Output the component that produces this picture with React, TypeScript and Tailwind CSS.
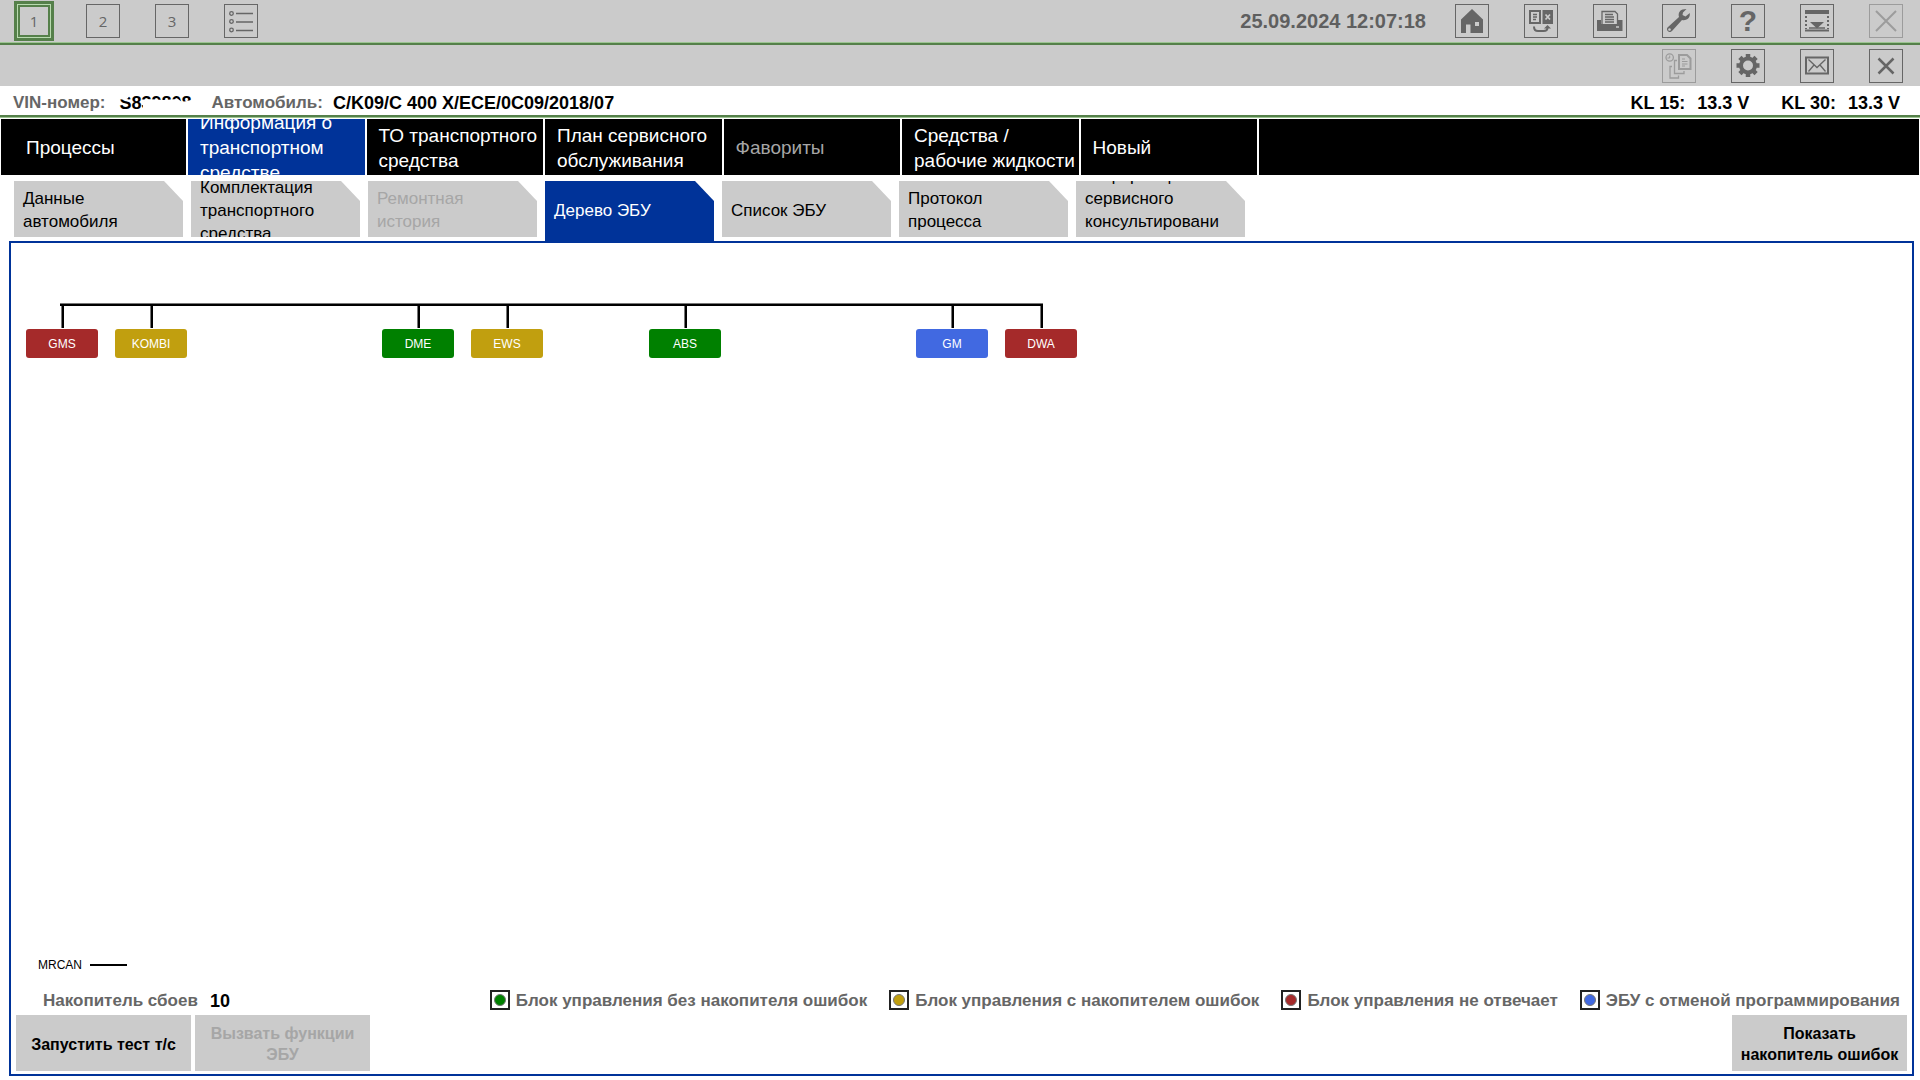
import type { ReactNode } from 'react';
import clsx from 'clsx';

const mainTabs = [
  { label: 'Информация о\nтранспортном\nсредстве', active: true },
  { label: 'ТО транспортного\nсредства' },
  { label: 'План сервисного\nобслуживания' },
  { label: 'Фавориты', disabled: true },
  { label: 'Средства /\nрабочие жидкости' },
  { label: 'Новый' },
];

const subTabs = [
  { label: 'Данные\nавтомобиля' },
  { label: 'Комплектация\nтранспортного\nсредства' },
  { label: 'Ремонтная\nистория', disabled: true },
  { label: 'Дерево ЭБУ', active: true },
  { label: 'Список ЭБУ' },
  { label: 'Протокол\nпроцесса' },
  { label: 'Информация\nсервисного\nконсультировани\nя' },
];

const colors = {
  ok: 'bg-[#008000]',
  fault: 'bg-[#c19f0f]',
  silent: 'bg-[#a52a2a]',
  aborted: 'bg-[#4169e1]',
};

// null = free slot on the bus
const ecus: ({ name: string; state: keyof typeof colors } | null)[] = [
  { name: 'GMS', state: 'silent' },
  { name: 'KOMBI', state: 'fault' },
  null,
  null,
  { name: 'DME', state: 'ok' },
  { name: 'EWS', state: 'fault' },
  null,
  { name: 'ABS', state: 'ok' },
  null,
  null,
  { name: 'GM', state: 'aborted' },
  { name: 'DWA', state: 'silent' },
];

const legend: { label: string; state: keyof typeof colors }[] = [
  { label: 'Блок управления без накопителя ошибок', state: 'ok' },
  { label: 'Блок управления с накопителем ошибок', state: 'fault' },
  { label: 'Блок управления не отвечает', state: 'silent' },
  { label: 'ЭБУ с отменой программирования', state: 'aborted' },
];

function IconButton({ label, disabled, children }: { label: string; disabled?: boolean; children: ReactNode }) {
  return (
    <button
      aria-label={label}
      disabled={disabled}
      className={clsx(
        'flex size-[34px] items-center justify-center border',
        disabled ? 'border-[#9c9c9c] text-[#9c9c9c]' : 'border-[#666] text-[#666]'
      )}
    >
      {children}
    </button>
  );
}

function Glyph({ children }: { children: ReactNode }) {
  return (
    <svg viewBox="1 1 32 32" className="size-8 shrink-0" fill="none" stroke="currentColor" strokeWidth="2">
      {children}
    </svg>
  );
}

function HomeIcon() {
  return (
    <Glyph>
      <path
        fill="currentColor"
        stroke="none"
        fillRule="evenodd"
        d="M17 5 28 15.500V29H15.500V20.500H11V29H6V15.500ZM20 18V22H24V18Z"
      />
    </Glyph>
  );
}

function SwapIcon() {
  return (
    <Glyph>
      <path d="M6 7H16V19H6Z" />
      <path d="M9 10.500H13M9 13H13M9 15.500H12" strokeWidth="1.300" />
      <path d="M18.500 6H29V20H18.500Z" fill="currentColor" stroke="none" />
      <path d="M21.500 10.500 26 15.500M26 10.500 21.500 15.500" stroke="#cbcbcb" strokeWidth="1.700" />
      <path d="M10 22.500C10 26 11.500 27 14 27H19.500C22.500 27 23.500 26 23.500 23.500" />
      <path d="M20 24.500 23.500 21 27 24.500Z" fill="currentColor" stroke="none" />
    </Glyph>
  );
}

function PrinterIcon() {
  return (
    <Glyph>
      <path d="M4 16H8V20H25V16H29.500V27H4Z" fill="currentColor" stroke="none" />
      <path d="M9 20V7.500H22L24.500 10V20" strokeWidth="1.300" />
      <path d="M12 10.500H20M12 13H21M12 15.500H21M12 18H21" strokeWidth="1.300" />
      <path d="M23 23H26" stroke="#cbcbcb" strokeWidth="1.500" />
    </Glyph>
  );
}

function WrenchIcon() {
  return (
    <Glyph>
      <path
        fill="currentColor"
        stroke="none"
        fillRule="evenodd"
        d="M24.500 5 20.500 5.500C17.500 6.500 16 9.500 17 13L5.500 23.500C4 25.500 6 28.500 8.500 28L10 27 20 16C24 17 27.500 14.500 27.800 11V9L23.500 12.500 20.500 11 21 8.500ZM7.500 24.200A1.300 1.300 0 1 0 7.510 24.200Z"
      />
    </Glyph>
  );
}

function CollapseIcon() {
  return (
    <Glyph>
      <path d="M5 6H29V10H5Z" fill="currentColor" stroke="none" />
      <path d="M6 12V25M28 12V25" strokeDasharray="2 2" />
      <path d="M10 18H24L17 24.500Z" fill="currentColor" stroke="none" />
      <path d="M9 24H25" strokeWidth="1.500" />
      <path d="M5 26.500H29" strokeWidth="2" />
    </Glyph>
  );
}

function HistoryDocsIcon() {
  return (
    <Glyph>
      <circle cx="7.700" cy="8.500" r="3.700" strokeWidth="1.300" />
      <path d="M7.700 6.500V9H5.500" strokeWidth="1" />
      <path d="M17 6H25L28.500 9.500V20H17Z" />
      <path d="M20 10H23M20 12.500H25.500M20 15H25.500M20 17H23" strokeWidth="1.200" />
      <path d="M15 11.500H12.500V24.500H22V22" strokeWidth="1.300" />
      <path d="M10 17.500H8V29H16.500V26.500" strokeWidth="1.300" />
    </Glyph>
  );
}

function GearIcon() {
  return (
    <Glyph>
      <circle cx="17" cy="16.500" r="7" strokeWidth="4" />
      <path
        d="M17 5V9M17 24V28M5.500 16.500H9.500M24.500 16.500H28.500M8.900 8.400 11.700 11.200M22.300 21.800 25.100 24.600M25.100 8.400 22.300 11.200M11.700 21.800 8.900 24.600"
        strokeWidth="4.500"
      />
    </Glyph>
  );
}

function MailIcon() {
  return (
    <Glyph>
      <path d="M6 8.500H28V24.500H6Z" />
      <path d="M8.500 10.500 17 18.500 25.500 10.500M8.500 22.500 14 16M25.500 22.500 20 16" strokeWidth="1.300" />
    </Glyph>
  );
}

function ListIcon() {
  return (
    <Glyph>
      <g strokeWidth="1.300">
        <circle cx="7.500" cy="9.500" r="1.800" />
        <circle cx="7.500" cy="17.500" r="1.800" />
        <circle cx="7.500" cy="26" r="1.800" />
        <path d="M12 9.500H29M12 18H29M12 26.500H29" />
      </g>
    </Glyph>
  );
}

function Rule({ flip }: { flip?: boolean }) {
  return (
    <div
      className={clsx('h-[3px] shrink-0 border-[#9cc492] bg-[#55804a]', flip ? 'border-b' : 'border-t')}
    />
  );
}

function TopBar() {
  return (
    <header className="flex h-[42px] shrink-0 items-start justify-between bg-[#cbcbcb] px-[17px] pt-1">
      <div className="flex gap-[35px] font-['Open_Sans',sans-serif] text-[15px] text-[#666]">
        <button className="size-[34px] border border-[#b9dab0] inset-ring-2 inset-ring-[#55804a] outline-3 outline-[#55804a]">
          1
        </button>
        <button className="size-[34px] border border-[#666]">2</button>
        <button className="size-[34px] border border-[#666]">3</button>
        <IconButton label="Список операций">
          <ListIcon />
        </IconButton>
      </div>
      <div className="flex items-center gap-[35px]">
        <time className="-mr-1.5 text-[20px] leading-[34px] font-bold text-[#5f5f5f]">25.09.2024 12:07:18</time>
        <IconButton label="Домой">
          <HomeIcon />
        </IconButton>
        <IconButton label="Переключить">
          <SwapIcon />
        </IconButton>
        <IconButton label="Печать">
          <PrinterIcon />
        </IconButton>
        <IconButton label="Сервис">
          <WrenchIcon />
        </IconButton>
        <IconButton label="Справка">
          <span className="text-[30px] leading-8 font-bold">?</span>
        </IconButton>
        <IconButton label="Свернуть">
          <CollapseIcon />
        </IconButton>
        <IconButton label="Выход" disabled>
          <Glyph>
            <path d="M7 7 27 27M27 7 7 27" />
          </Glyph>
        </IconButton>
      </div>
    </header>
  );
}

function ToolBar() {
  return (
    <div className="flex h-[41px] shrink-0 justify-end gap-[35px] bg-[#cbcbcb] px-[17px] pt-1">
      <IconButton label="История документов" disabled>
        <HistoryDocsIcon />
      </IconButton>
      <IconButton label="Настройки">
        <GearIcon />
      </IconButton>
      <IconButton label="Сообщения">
        <MailIcon />
      </IconButton>
      <IconButton label="Закрыть">
        <Glyph>
          <path d="M9.500 9.500 24.500 24.500M24.500 9.500 9.500 24.500" strokeWidth="2.500" />
        </Glyph>
      </IconButton>
    </div>
  );
}

function VehicleInfo() {
  return (
    <div className="flex h-[29px] shrink-0 items-center pt-1 pr-5 pl-[13px] text-[18px] leading-6 font-bold">
      <span className="text-[17px] text-[#666]">VIN-номер:</span>
      <span className="relative ml-3.5">
        S839808
        {/* hides most of the serial */}
        <svg viewBox="0 0 76 24" className="absolute top-0 left-0 h-6 w-[76px]" fill="#fff">
          <path d="M0 0H13L8 7 4 9 0 8ZM23 24V12L26 8 44 9 58 8 62 11 76 8V24Z" />
        </svg>
      </span>
      <span className="ml-5 text-[17px] text-[#666]">Автомобиль:</span>
      <span className="ml-2.5">C/K09/C 400 X/ECE/0C09/2018/07</span>
      <span className="ml-auto">KL 15:</span>
      <span className="ml-3">13.3 V</span>
      <span className="ml-8">KL 30:</span>
      <span className="ml-3">13.3 V</span>
    </div>
  );
}

function MainTabs() {
  return (
    <nav className="mx-px mt-px flex h-14 shrink-0 gap-[2px] text-[19px] leading-[25px]">
      <button className="w-[185px] bg-black pt-px pl-[25px] text-left text-white">Процессы</button>
      <div className="grid w-[1069px] grid-cols-6 gap-[2px]">
        {mainTabs.map((tab) => (
          <button
            key={tab.label}
            disabled={tab.disabled}
            className={clsx(
              'flex items-center overflow-hidden pt-px pl-3 text-left whitespace-pre',
              tab.active ? 'bg-[#003399]' : 'bg-black',
              tab.disabled ? 'text-[#a6a6a6]' : 'text-white'
            )}
          >
            {tab.label}
          </button>
        ))}
      </div>
      <div className="flex-1 bg-black" />
    </nav>
  );
}

function SubTabs() {
  return (
    <nav className="mt-1.5 flex h-[60px] shrink-0 items-start gap-2 pl-3.5 text-[17px] leading-[23px]">
      {subTabs.map((tab) => (
        <button
          key={tab.label}
          disabled={tab.disabled}
          className={clsx(
            'flex w-[169px] items-center overflow-hidden pt-0.5 pl-[9px] text-left whitespace-pre [clip-path:polygon(0_0,150px_0,100%_20px,100%_100%,0_100%)]',
            tab.active ? 'h-[60px] bg-[#003399] pb-1 text-white' : 'h-14 bg-[#cbcbcb]',
            tab.disabled && 'text-[#a6a6a6]'
          )}
        >
          {tab.label}
        </button>
      ))}
    </nav>
  );
}

function EcuTree() {
  return (
    <div className="relative flex gap-[17px]">
      <div className="absolute top-0 left-[34px] h-[3px] w-[983px] border-t border-[#777] bg-black" />
      {ecus.map((ecu, i) => (
        <div key={i} className="flex w-18 flex-col items-center">
          {ecu && (
            <>
              <div className="h-[25px] w-[3px] border-l border-[#777] bg-black" />
              <button
                className={clsx('mt-px h-[29px] w-full rounded-[3px] text-[12px] text-white', colors[ecu.state])}
              >
                {ecu.name}
              </button>
            </>
          )}
        </div>
      ))}
    </div>
  );
}

export default function App() {
  return (
    <div className="flex min-h-screen flex-col bg-white pb-1 font-['Liberation_Sans',Arial,sans-serif] text-black">
      <TopBar />
      <Rule />
      <ToolBar />
      <VehicleInfo />
      <Rule flip />
      <MainTabs />
      <SubTabs />

      <main className="mr-1.5 ml-[9px] flex flex-1 flex-col border-2 border-[#003399]">
        <div className="flex-1 pt-[60px] pl-[15px]">
          <EcuTree />
        </div>

        <div className="mb-2.5 flex h-5 items-center gap-2 pl-[27px] text-[12px]">
          MRCAN
          <span className="h-[2px] w-[37px] bg-black" />
        </div>

        <div className="flex h-[30px] items-center pr-3 pl-8 text-[17px] font-bold text-[#666]">
          <span className="pt-0.5">Накопитель сбоев</span>
          <span className="ml-3 pt-0.5 text-[18px] text-black">10</span>
          <ul className="ml-auto flex gap-[22px]">
            {legend.map((item) => (
              <li key={item.state} className="flex items-center gap-1.5">
                <span className="flex size-5 items-center justify-center border-2 border-[#222]">
                  <span className={clsx('size-3 rounded-full border border-[#777]', colors[item.state])} />
                </span>
                <span className="pt-0.5">{item.label}</span>
              </li>
            ))}
          </ul>
        </div>

        <div className="mb-[3px] flex gap-1 px-[5px] text-[16px] leading-[21px] font-bold whitespace-pre-line">
          <button className="h-14 w-[175px] bg-[#cbcbcb] pt-0.5">Запустить тест т/с</button>
          <button disabled className="h-14 w-[175px] bg-[#cbcbcb] pt-0.5 text-[#a6a6a6]">
            {'Вызвать функции\nЭБУ'}
          </button>
          <button className="ml-auto h-14 w-[175px] bg-[#cbcbcb] pt-0.5">{'Показать\nнакопитель ошибок'}</button>
        </div>
      </main>
    </div>
  );
}
